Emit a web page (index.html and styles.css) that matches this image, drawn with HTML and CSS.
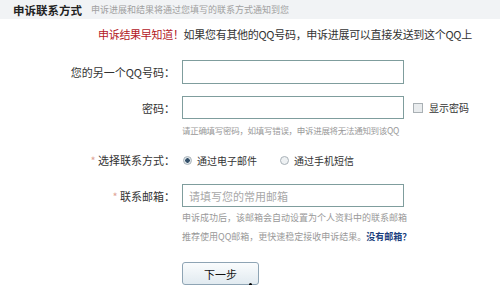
FILE: index.html
```html
<!DOCTYPE html>
<html lang="zh-CN">
<head>
    <meta charset="utf-8" />
    <title>申诉联系方式</title>
    <link rel="stylesheet" href="styles.css">
</head>
<body>
    <div class="header">
        <span class="header-title">申诉联系方式</span>
        <span class="header-sub">申诉进展和结果将通过您填写的联系方式通知到您</span>
    </div>

    <div class="notice"><span class="notice-red">申诉结果早知道！</span>如果您有其他的QQ号码，申诉进展可以直接发送到这个QQ上</div>

    <div class="form">
        <div class="row row-qq">
            <label class="label">您的另一个QQ号码：</label>
            <input class="text-input" type="text" />
        </div>

        <div class="row row-pwd">
            <label class="label">密码：</label>
            <input class="text-input" type="password" />
            <span class="show-pwd"><span class="checkbox"></span>显示密码</span>
        </div>
        <div class="hint hint-pwd">请正确填写密码，如填写错误，申诉进展将无法通知到该QQ</div>

        <div class="row row-radio">
            <label class="label"><span class="star">*</span> 选择联系方式：</label>
            <span class="radio-item"><span class="radio checked"></span>通过电子邮件</span>
            <span class="radio-item radio-second"><span class="radio"></span>通过手机短信</span>
        </div>

        <div class="row row-mail">
            <label class="label"><span class="star">*</span> 联系邮箱：</label>
            <input class="text-input text-mail" type="text" placeholder="请填写您的常用邮箱" />
        </div>
        <div class="hint hint-mail">申诉成功后，该邮箱会自动设置为个人资料中的联系邮箱<br />推荐使用QQ邮箱，更快速稳定接收申诉结果。<a class="no-mail" href="#">没有邮箱？</a></div>

        <div class="row row-btn">
            <button type="button" class="btn-next">下一步</button>
        </div>
    </div>
</body>
</html>
```

FILE: styles.css
```css
body {
    margin: 0;
    font-family: "Noto Sans CJK SC", "Liberation Sans", sans-serif;
    font-size: 11px;
    color: #333;
    background: #fff;
}

.header {
    height: 19px;
    background: #f1f3f5;
    padding-left: 13px;
    display: flex;
    align-items: center;
}

.header-title {
    font-size: 11.5px;
    font-weight: bold;
    color: #222;
}

.header-sub {
    font-size: 9px;
    color: #a0a0a0;
    margin-left: 9px;
}

.notice {
    margin-top: 7px;
    padding-left: 98px;
    line-height: 16px;
    font-size: 11px;
    letter-spacing: -0.3px;
    color: #333;
}

.notice-red {
    color: #b3171f;
}

.form {
    margin-top: 18px;
}

.row {
    display: flex;
    align-items: center;
}

.label {
    width: 175px;
    text-align: right;
    margin-right: 7px;
    font-size: 11px;
    color: #333;
}

.star {
    color: #e0a595;
}

.text-input {
    box-sizing: border-box;
    width: 222px;
    height: 24px;
    margin: 0;
    padding: 0 6px;
    border: 1px solid #7f9d9d;
    font-family: inherit;
    font-size: 11px;
    outline: none;
}

.text-input::placeholder {
    color: #a8a8a8;
}

.row-pwd {
    margin-top: 12px;
}

.row-pwd .text-input {
    height: 23px;
}

.show-pwd {
    display: flex;
    align-items: center;
    margin-left: 9px;
    font-size: 10px;
    color: #333;
}

.checkbox {
    width: 8px;
    height: 8px;
    border: 1px solid #a9b0b4;
    background: #e9ecee;
    margin-right: 6px;
}

.hint {
    margin-left: 182px;
    font-size: 9px;
    color: #999;
}

.hint-pwd {
    margin-top: 5px;
    line-height: 12px;
    font-size: 8.5px;
    letter-spacing: -0.3px;
}

.row-radio {
    margin-top: 16px;
    height: 16px;
}

.radio-item {
    display: flex;
    align-items: center;
    font-size: 10px;
    color: #333;
}

.radio-second {
    margin-left: 22px;
}

.radio {
    box-sizing: border-box;
    width: 9px;
    height: 9px;
    border-radius: 50%;
    border: 1px solid #a9b2b8;
    background: #eef1f3;
    margin: 0 5px 0 1px;
}

.radio.checked {
    background: radial-gradient(circle, #34506a 0, #34506a 2px, #dfe6ea 2.5px);
}

.row-mail {
    margin-top: 16px;
}

.row-mail .text-input {
    height: 23px;
    font-size: 11px;
}

.hint-mail {
    margin-top: 1px;
    line-height: 19px;
}

.no-mail {
    color: #1b3f7e;
    font-weight: bold;
    text-decoration: none;
}

.row-btn {
    margin-top: 16px;
    padding-left: 182px;
}

.btn-next {
    position: relative;
    width: 77px;
    height: 23px;
    border: 1px solid #8ea4b4;
    border-radius: 3px;
    background: linear-gradient(#fafcfd, #e1eaf0);
    font-family: inherit;
    font-size: 11px;
    color: #111;
    padding: 0;
}

.btn-next::after {
    content: "";
    position: absolute;
    right: 6px;
    bottom: -2px;
    width: 3px;
    height: 3px;
    border-radius: 50%;
    background: #000;
}
```
